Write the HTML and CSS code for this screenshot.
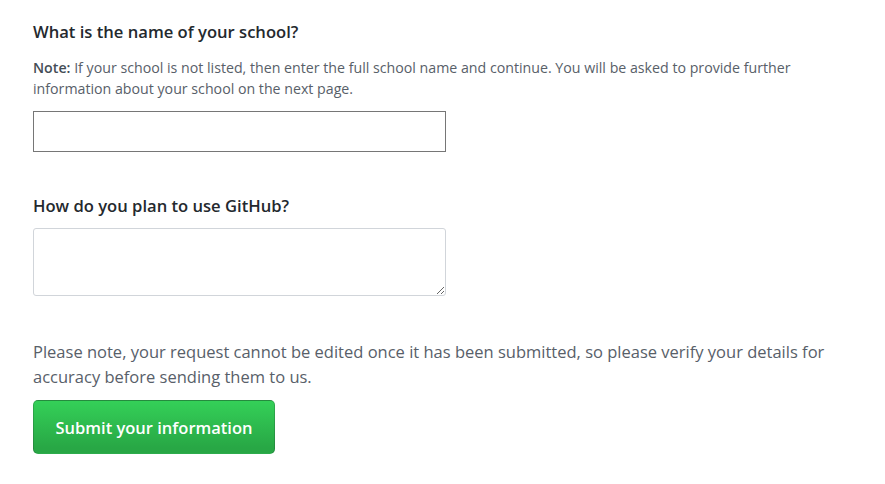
FILE: index.html
```html
<!DOCTYPE html>
<html>
<head>
<meta charset="utf-8">
<link rel="stylesheet" href="styles.css">
</head>
<body>
<form class="form">
  <div class="group">
    <h3 class="label">What is the name of your school?</h3>
    <p class="note"><strong>Note:</strong> If your school is not listed, then enter the full school name and continue. You will be asked to provide further information about your school on the next page.</p>
    <input class="input" type="text">
  </div>
  <div class="group group-2">
    <h3 class="label">How do you plan to use GitHub?</h3>
    <textarea class="textarea"></textarea>
  </div>
  <p class="warning">Please note, your request cannot be edited once it has been submitted, so please verify your details for accuracy before sending them to us.</p>
  <button class="btn" type="button">Submit your information</button>
</form>
</body>
</html>
```
FILE: styles.css
```css
html, body {
  margin: 0;
  padding: 0;
  background: #fff;
}
body {
  font-family: "Open Sans", "Noto Sans", sans-serif;
  color: #24292e;
}
.form {
  padding: 20px 33px;
  width: 800px;
}
.label {
  margin: 0;
  font-size: 16.6px;
  font-weight: 600;
  line-height: 24px;
  color: #24292e;
}
.note {
  margin: 13px 0 0;
  font-size: 14.2px;
  line-height: 21px;
  color: #586069;
}
.note strong {
  color: #444d56;
  font-weight: 600;
}
.input {
  display: block;
  box-sizing: border-box;
  margin-top: 12px;
  width: 413px;
  height: 41px;
  border: 1px solid #767676;
  border-radius: 0;
  padding: 0 8px;
  font-size: 14px;
}
.group-2 {
  margin-top: 42px;
}
.textarea {
  display: block;
  box-sizing: border-box;
  margin-top: 10px;
  width: 413px;
  height: 68px;
  border: 1px solid #d1d5da;
  border-radius: 3px;
  resize: vertical;
}
.warning {
  margin: 43px 0 0;
  font-size: 16.5px;
  line-height: 25px;
  color: #586069;
}
.btn {
  display: block;
  margin-top: 11px;
  width: 242px;
  height: 54px;
  border: 1px solid rgba(27,31,35,0.2);
  border-radius: 5px;
  background: linear-gradient(-180deg, #34d058 0%, #28a745 90%);
  color: #fff;
  font-family: inherit;
  font-size: 16.5px;
  font-weight: 600;
  padding: 0;
}
```
